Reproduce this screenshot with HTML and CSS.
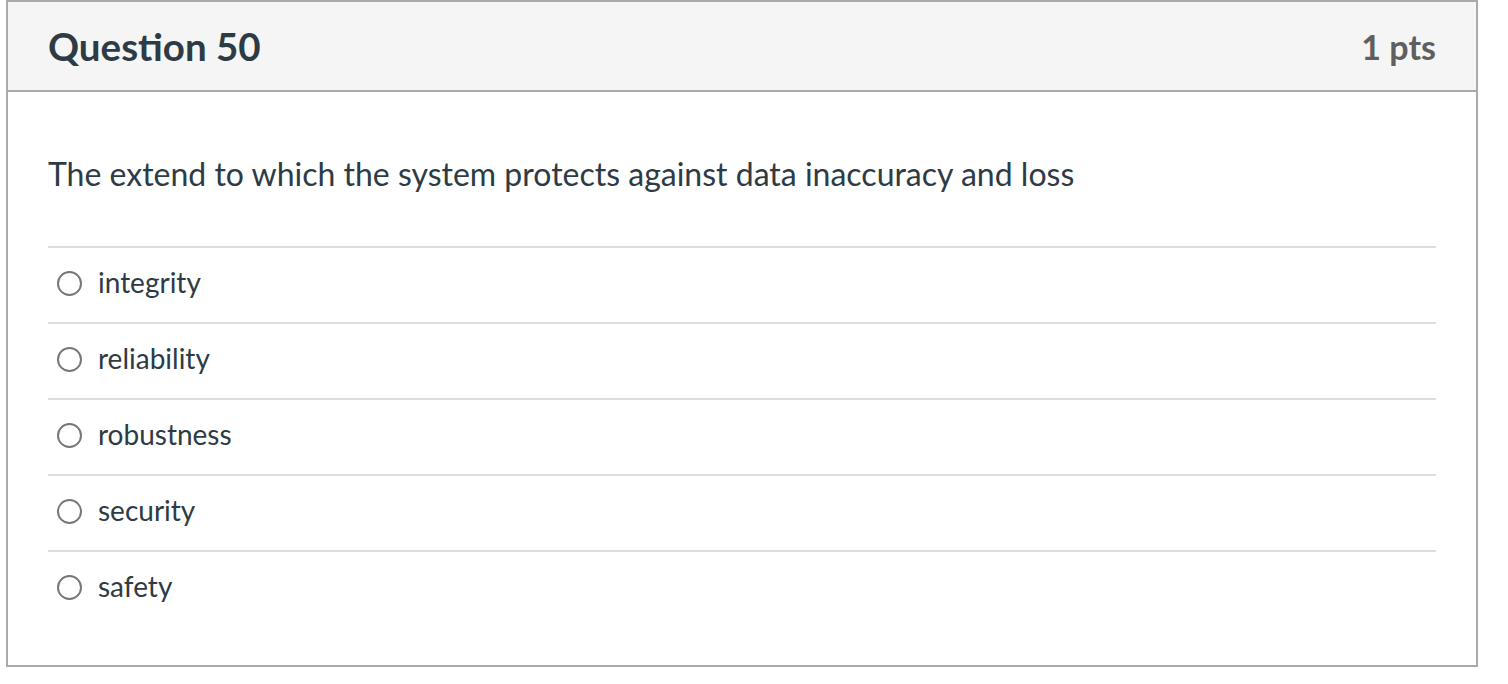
FILE: index.html
```html
<!DOCTYPE html>
<html lang="en">
<head>
<meta charset="utf-8">
<title>Question 50</title>
<link rel="stylesheet" href="styles.css">
</head>
<body>
<div class="question">
  <div class="header">
    <h2 class="title">Question 50</h2>
    <div class="pts">1 pts</div>
  </div>
  <div class="content">
    <p class="text">The extend to which the system protects against data inaccuracy and loss</p>
    <div class="answers">
      <label class="answer"><span class="radio"></span><span class="label">integrity</span></label>
      <label class="answer"><span class="radio"></span><span class="label">reliability</span></label>
      <label class="answer"><span class="radio"></span><span class="label">robustness</span></label>
      <label class="answer"><span class="radio"></span><span class="label">security</span></label>
      <label class="answer"><span class="radio"></span><span class="label">safety</span></label>
    </div>
  </div>
</div>
</body>
</html>
```
FILE: styles.css
```css
html, body {
  margin: 0;
  padding: 0;
  background: #fff;
}
body {
  font-family: Lato, "Liberation Sans", sans-serif;
  color: #2d3b45;
}
.question {
  margin-left: 6px;
  width: 1468px;
  border: 2px solid #aaaaaa;
}
.header {
  display: flex;
  justify-content: space-between;
  align-items: center;
  height: 88px;
  padding: 0 40px;
  background: #f5f5f5;
  border-bottom: 2px solid #aaaaaa;
}
.title {
  margin: 0;
  font-size: 38.5px;
  font-weight: 700;
  color: #2d3b45;
}
.pts {
  font-size: 34px;
  font-weight: 700;
  color: #5f5f5f;
}
.content {
  padding: 0 40px 39px;
}
.text {
  margin: 0;
  padding-top: 60px;
  height: 44px;
  line-height: 44px;
  font-size: 32px;
  margin-bottom: 50px;
}
.answer {
  display: flex;
  align-items: center;
  height: 71px;
  padding-bottom: 3px;
  border-top: 2px solid #dddddd;
  padding-left: 9px;
}
.radio {
  width: 21px;
  height: 21px;
  border: 2px solid #777777;
  border-radius: 50%;
  margin-right: 16px;
  flex: none;
}
.label {
  font-size: 28px;
  padding-bottom: 3px;
}
```
